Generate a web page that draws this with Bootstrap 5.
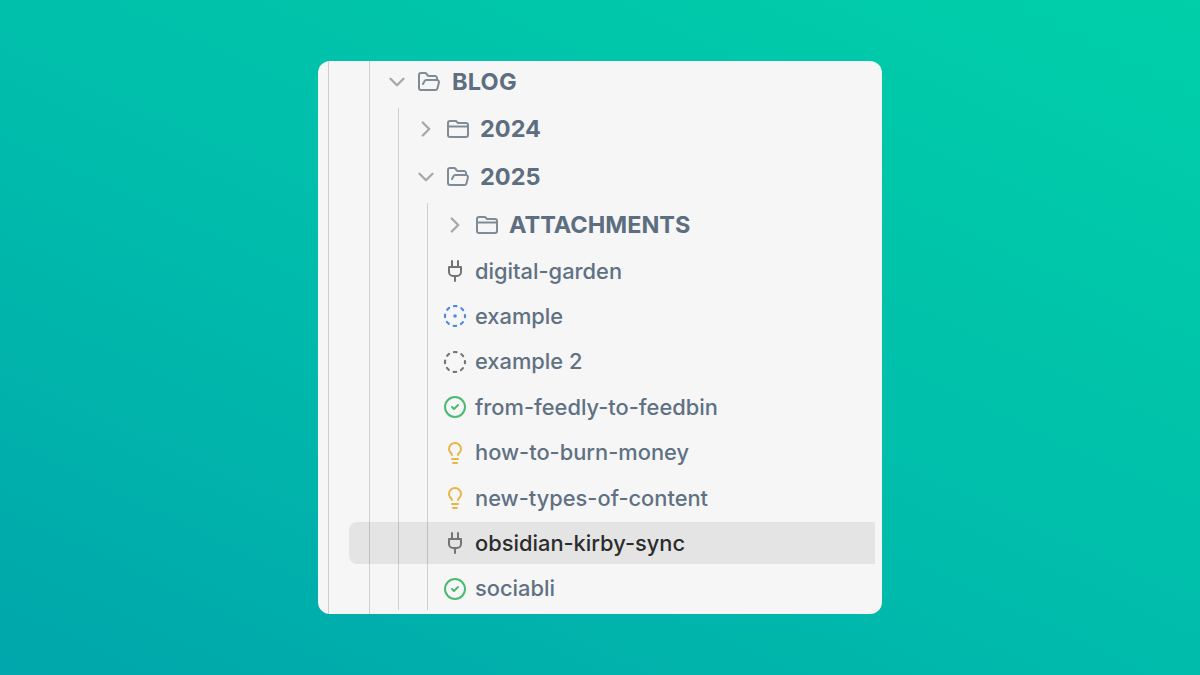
<!DOCTYPE html>
<html lang="en">
<head>
    <meta charset="UTF-8">
    <meta name="viewport" content="width=device-width, initial-scale=1.0">
    <title>File tree</title>
    <link rel="stylesheet" href="https://cdn.jsdelivr.net/npm/bootstrap@5.3.0/dist/css/bootstrap.min.css">
    <style>
        body {
            width: 1200px;
            height: 675px;
            overflow: hidden;
            background: linear-gradient(205deg, #00cfa9 0%, #00bcab 55%, #00a6ab 100%);
            font-family: Inter, "Liberation Sans", sans-serif;
        }
        .stage { height: 675px; padding-top: 61px; }
        .panel {
            width: 564px;
            height: 553px;
            background: #f6f6f6;
            border-radius: 12px;
            overflow: hidden;
            padding-left: 10px;
            padding-right: 7px;
        }
        .guide { border-left: 1px solid #cfcfcf; }
        .guide-outer { height: 553px; padding-left: 40px; }
        .guide-inner { height: 553px; }
        .branch { margin-left: 28px; margin-top: 5px; }
        .branch-files { padding-top: 1px; }
        .tree-row { height: 42px; }
        .folder-row {
            font-size: 23.5px;
            font-weight: 700;
            color: #5c6e7f;
        }
        .row-next { margin-top: 6px; }
        .row-first { margin-bottom: 4px; }
        .label-blog { margin-left: 1px; letter-spacing: .2px; }
        .file-row {
            font-size: 21.85px;
            font-weight: 500;
            color: #5f7183;
            margin-bottom: 3.4px;
            padding-left: 15px;
        }
        .chev { width: 26px; height: 26px; margin-left: 14px; margin-right: -2px; color: #a8a8a8; flex: none; stroke-width: 2.2; }
        .folder-ico { width: 24px; height: 24px; margin-left: 9px; margin-right: 10px; color: #7f8c98; flex: none; }
        .file-ico { width: 24px; height: 24px; margin-right: 8px; flex: none; }
        .ico-plug { color: #757575; }
        .ico-blue { color: #4f87e0; }
        .ico-grey { color: #757575; }
        .ico-green { color: #4bba72; }
        .ico-yellow { color: #e7b545; }
        .dashed { stroke-width: 2.2; stroke-linecap: round; stroke-dasharray: 2.6 5.25; stroke-dashoffset: 1.3; }
        .row-active {
            background: rgba(0, 0, 0, .07);
            border-radius: 8px 0 0 8px;
            color: #2c2c2c;
            margin-left: -79px;
            padding-left: 94px;
        }
        svg { fill: none; stroke: currentColor; stroke-width: 2; stroke-linecap: round; stroke-linejoin: round; }
    </style>
</head>
<body>
    <div class="stage d-flex justify-content-center">
        <div class="panel">
            <div class="guide guide-outer">
                <div class="guide guide-inner">
                    <div class="tree-row folder-row d-flex align-items-center">
                        <svg class="chev" viewBox="0 0 24 24"><path d="m6 9 6 6 6-6"/></svg>
                        <svg class="folder-ico" viewBox="0 0 24 24"><path d="m6 14 1.5-2.9A2 2 0 0 1 9.24 10H20a2 2 0 0 1 1.94 2.5l-1.54 6a2 2 0 0 1-1.95 1.5H4a2 2 0 0 1-2-2V5a2 2 0 0 1 2-2h3.9a2 2 0 0 1 1.69.9l.81 1.2a2 2 0 0 0 1.67.9H18a2 2 0 0 1 2 2v2"/></svg>
                        <span class="label-blog">BLOG</span>
                    </div>
                    <div class="guide branch">
                        <div class="tree-row folder-row d-flex align-items-center">
                            <svg class="chev" viewBox="0 0 24 24"><path d="m9 18 6-6-6-6"/></svg>
                            <svg class="folder-ico" viewBox="0 0 24 24"><path d="M4 20h16a2 2 0 0 0 2-2V8a2 2 0 0 0-2-2h-8L10 4H4a2 2 0 0 0-2 2v12a2 2 0 0 0 2 2Z"/><path d="M2 9.500h20"/></svg>
                            <span>2024</span>
                        </div>
                        <div class="tree-row folder-row row-next d-flex align-items-center">
                            <svg class="chev" viewBox="0 0 24 24"><path d="m6 9 6 6 6-6"/></svg>
                            <svg class="folder-ico" viewBox="0 0 24 24"><path d="m6 14 1.5-2.9A2 2 0 0 1 9.24 10H20a2 2 0 0 1 1.94 2.5l-1.54 6a2 2 0 0 1-1.95 1.5H4a2 2 0 0 1-2-2V5a2 2 0 0 1 2-2h3.9a2 2 0 0 1 1.69.9l.81 1.2a2 2 0 0 0 1.67.9H18a2 2 0 0 1 2 2v2"/></svg>
                            <span>2025</span>
                        </div>
                        <div class="guide branch branch-files">
                            <div class="tree-row folder-row row-first d-flex align-items-center">
                                <svg class="chev" viewBox="0 0 24 24"><path d="m9 18 6-6-6-6"/></svg>
                                <svg class="folder-ico" viewBox="0 0 24 24"><path d="M4 20h16a2 2 0 0 0 2-2V8a2 2 0 0 0-2-2h-8L10 4H4a2 2 0 0 0-2 2v12a2 2 0 0 0 2 2Z"/><path d="M2 9.500h20"/></svg>
                                <span>ATTACHMENTS</span>
                            </div>
                            <div class="tree-row file-row d-flex align-items-center">
                                <svg class="file-ico ico-plug" viewBox="0 0 24 24"><path d="M12 22v-5"/><path d="M9 8V2"/><path d="M15 8V2"/><path d="M18 8v5a4 4 0 0 1-4 4h-4a4 4 0 0 1-4-4V8Z"/></svg>
                                <span>digital-garden</span>
                            </div>
                            <div class="tree-row file-row d-flex align-items-center">
                                <svg class="file-ico ico-blue" viewBox="0 0 24 24"><circle class="dashed" cx="12" cy="12" r="10"/><circle cx="12" cy="12" r=".8"/></svg>
                                <span>example</span>
                            </div>
                            <div class="tree-row file-row d-flex align-items-center">
                                <svg class="file-ico ico-grey" viewBox="0 0 24 24"><circle class="dashed" cx="12" cy="12" r="10"/></svg>
                                <span>example 2</span>
                            </div>
                            <div class="tree-row file-row d-flex align-items-center">
                                <svg class="file-ico ico-green" viewBox="0 0 24 24"><circle cx="12" cy="12" r="10"/><path d="m9 12 2 2 4-4"/></svg>
                                <span>from-feedly-to-feedbin</span>
                            </div>
                            <div class="tree-row file-row d-flex align-items-center">
                                <svg class="file-ico ico-yellow" viewBox="0 0 24 24"><path d="M15 14c.2-1 .7-1.700 1.500-2.500 1-.9 1.500-2.200 1.500-3.500A6 6 0 0 0 6 8c0 1 .2 2.200 1.500 3.500.7.7 1.300 1.500 1.500 2.500"/><path d="M9 18h6"/><path d="M10 22h4"/></svg>
                                <span>how-to-burn-money</span>
                            </div>
                            <div class="tree-row file-row d-flex align-items-center">
                                <svg class="file-ico ico-yellow" viewBox="0 0 24 24"><path d="M15 14c.2-1 .7-1.700 1.500-2.500 1-.9 1.500-2.200 1.500-3.500A6 6 0 0 0 6 8c0 1 .2 2.200 1.500 3.500.7.7 1.300 1.500 1.500 2.500"/><path d="M9 18h6"/><path d="M10 22h4"/></svg>
                                <span>new-types-of-content</span>
                            </div>
                            <div class="tree-row file-row row-active d-flex align-items-center">
                                <svg class="file-ico ico-plug" viewBox="0 0 24 24"><path d="M12 22v-5"/><path d="M9 8V2"/><path d="M15 8V2"/><path d="M18 8v5a4 4 0 0 1-4 4h-4a4 4 0 0 1-4-4V8Z"/></svg>
                                <span>obsidian-kirby-sync</span>
                            </div>
                            <div class="tree-row file-row d-flex align-items-center mb-0">
                                <svg class="file-ico ico-green" viewBox="0 0 24 24"><circle cx="12" cy="12" r="10"/><path d="m9 12 2 2 4-4"/></svg>
                                <span>sociabli</span>
                            </div>
                        </div>
                    </div>
                </div>
            </div>
        </div>
    </div>
    <script src="https://cdn.jsdelivr.net/npm/bootstrap@5.3.0/dist/js/bootstrap.bundle.min.js"></script>
</body>
</html>
